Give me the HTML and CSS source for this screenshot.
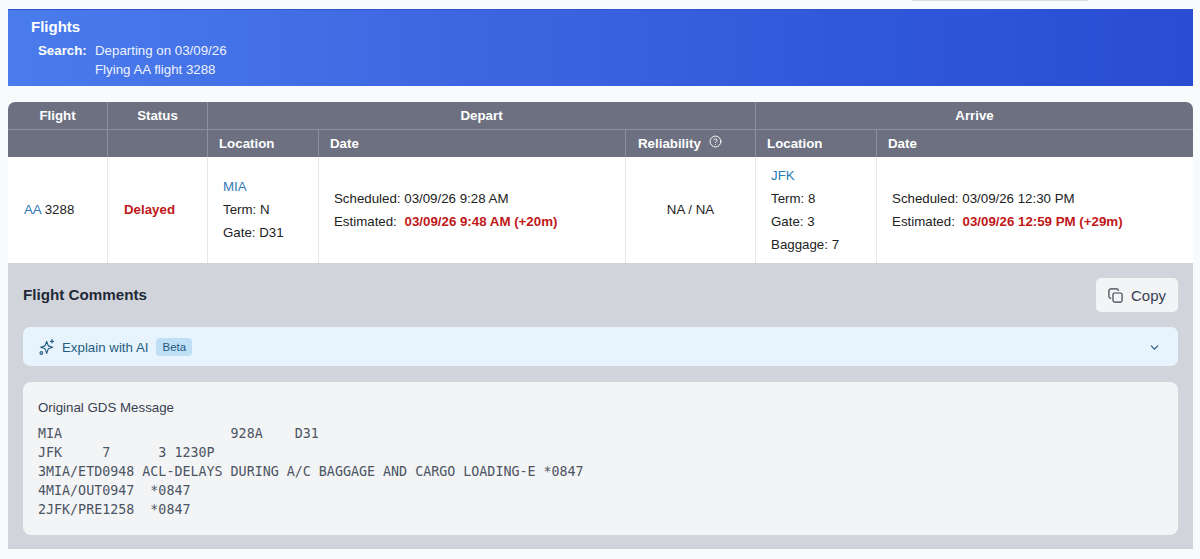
FILE: index.html
```html
<!DOCTYPE html>
<html lang="en">
<head>
<meta charset="utf-8">
<title>Flights</title>
<link rel="stylesheet" href="styles.css">
</head>
<body>
<div class="top-sliver"><div class="pill"></div></div>
<header class="banner">
  <h1>Flights</h1>
  <div class="search">
    <span class="search-label">Search:</span>
    <div class="search-lines"><div>Departing on 03/09/26</div><div>Flying AA flight 3288</div></div>
  </div>
</header>
<table class="flights">
  <colgroup>
    <col class="c1"><col class="c2"><col class="c3"><col class="c4"><col class="c5"><col class="c6"><col class="c7">
  </colgroup>
  <thead>
    <tr class="r1">
      <th>Flight</th><th>Status</th><th colspan="3">Depart</th><th colspan="2">Arrive</th>
    </tr>
    <tr class="r2">
      <th></th><th></th><th class="left">Location</th><th class="left">Date</th>
      <th class="left rel-head"><span class="rel-wrap">Reliability<svg class="help" viewBox="0 0 24 24" fill="none" stroke="currentColor" stroke-width="1.800" stroke-linecap="round" stroke-linejoin="round"><circle cx="12" cy="12" r="10"/><path d="M9.100 9a3 3 0 0 1 5.800 1c0 2-2.900 2.600-2.900 4"/><path d="M12 17.500h.01"/></svg></span></th>
      <th class="left">Location</th><th class="left">Date</th>
    </tr>
  </thead>
  <tbody>
    <tr>
      <td class="flight raised"><a href="#">AA</a> 3288</td>
      <td class="status raised">Delayed</td>
      <td class="loc raised"><a href="#">MIA</a><div>Term: N</div><div>Gate: D31</div></td>
      <td class="date"><div>Scheduled: 03/09/26 9:28 AM</div><div>Estimated: <b>03/09/26 9:48 AM (+20m)</b></div></td>
      <td class="rel raised">NA / NA</td>
      <td class="loc"><a href="#">JFK</a><div>Term: 8</div><div>Gate: 3</div><div>Baggage: 7</div></td>
      <td class="date"><div>Scheduled: 03/09/26 12:30 PM</div><div>Estimated: <b>03/09/26 12:59 PM (+29m)</b></div></td>
    </tr>
  </tbody>
</table>
<section class="comments">
  <div class="comments-head">
    <h2>Flight Comments</h2>
    <button class="copy" type="button">
      <svg viewBox="0 0 24 24" fill="none" stroke="currentColor" stroke-width="1.900" stroke-linecap="round" stroke-linejoin="round"><rect x="8" y="8" width="14.500" height="14.500" rx="2.500"/><path d="M4.500 16.500C3 16.500 1.500 15.500 1.500 14V4.500C1.500 3 3 1.500 4.500 1.500H14c1.500 0 2.500 1 2.500 2.500"/></svg>
      Copy
    </button>
  </div>
  <div class="ai">
    <div class="ai-left">
      <svg class="spark" viewBox="0 0 24 24" fill="none" stroke="currentColor" stroke-width="1.700" stroke-linecap="round" stroke-linejoin="round"><path d="M11.500 3.500l2.100 5.900c.2.600.7 1.100 1.300 1.300l5.600 1.800-5.600 1.800c-.6.2-1.100.7-1.300 1.300l-2.100 5.900-2.100-5.900c-.2-.6-.7-1.100-1.300-1.300l-5.600-1.800 5.600-1.800c.6-.2 1.100-.7 1.300-1.300z"/><path d="M19.500 1v5M17 3.500h5"/><circle cx="3.500" cy="21" r="2"/></svg>
      <span>Explain with AI</span>
      <span class="beta">Beta</span>
    </div>
    <svg class="chev" viewBox="0 0 24 24" fill="none" stroke="currentColor" stroke-width="2.200" stroke-linecap="round" stroke-linejoin="round"><path d="M6 9l6 6 6-6"/></svg>
  </div>
  <div class="gds">
    <div class="gds-title">Original GDS Message</div>
<pre>MIA                     928A    D31
JFK     7      3 1230P
3MIA/ETD0948 ACL-DELAYS DURING A/C BAGGAGE AND CARGO LOADING-E *0847
4MIA/OUT0947  *0847
2JFK/PRE1258  *0847</pre>
  </div>
</section>
</body>
</html>
```
FILE: styles.css
```css
* { box-sizing: border-box; }
html, body { height: 559px; overflow: hidden; }
body {
  margin: 0;
  padding: 0 7px 0 8px;
  background: #f9fafb;
  font-family: "Liberation Sans", Arial, sans-serif;
  font-size: 13.300px;
  color: #1f2937;
}
.top-sliver { height: 9px; display: flex; justify-content: flex-end; padding-right: 105px; }
.pill { width: 176px; height: 1px; background: #d9dbe0; border-radius: 0 0 6px 6px; }
.banner {
  height: 77px;
  padding: 9px 23px 0;
  color: #fff;
  background: linear-gradient(90deg, #4a7cec 0%, #3e68e2 35%, #3059da 70%, #2a4cd2 100%);
  border-top: 1px solid #2f55c8;
}
.banner h1 { margin: 0; font-size: 15px; line-height: 16px; font-weight: 700; }
.search { display: flex; margin: 6px 0 0 7px; line-height: 19px; }
.search-label { font-weight: 700; width: 57px; }
.search-lines { color: #eef2ff; }
.flights {
  width: 100%;
  margin-top: 16px;
  border-collapse: separate;
  border-spacing: 0;
  table-layout: fixed;
  background: #fff;
}
.c1 { width: 100px; } .c2 { width: 100px; } .c3 { width: 111px; } .c4 { width: 307px; }
.c5 { width: 130px; } .c6 { width: 121px; }
.flights th {
  background: #6d7080;
  color: #fff;
  font-size: 13.300px;
  font-weight: 700;
  text-align: center;
  padding: 0 11px;
  border-right: 1px solid #8d919e;
}
.flights th:last-child { border-right: 0; }
.flights th.left { text-align: left; }
.flights th.rel-head { padding-left: 12px; }
.rel-wrap { display: flex; align-items: center; }
.r1 th { height: 28px; border-bottom: 1px solid #8d919e; }
.r2 th { height: 27px; }
.r1 th:first-child { border-top-left-radius: 7px; }
.r1 th:last-child { border-top-right-radius: 7px; }
.help { width: 13px; height: 13px; margin: -5px 0 0 8px; }
.flights td {
  height: 106px;
  padding: 0 15px;
  border-right: 1px solid #e5e7eb;
  color: #222;
  line-height: 23px;
}
.flights td.raised { padding-bottom: 2px; }
.flights td:last-child { border-right: 0; }
.flights a { color: #2f7ab5; text-decoration: none; }
.flights td.flight { padding-left: 16px; }
.flights td.status { padding-left: 16px; color: #c01818; font-weight: 700; }
.flights td.date b { color: #c01818; margin-left: 4px; }
.flights td.rel { text-align: center; }
.comments {
  height: 286px;
  padding: 15px 15px 0;
  background: #d1d5db;
}
.comments-head { display: flex; justify-content: space-between; align-items: center; height: 34px; }
.comments h2 { margin: 0 0 2px; font-size: 15.200px; font-weight: 700; color: #1f2937; }
.copy {
  display: flex; align-items: center; gap: 8px;
  width: 82px; height: 34px;
  padding: 0 0 0 12px;
  border: 0; border-radius: 5px;
  background: #f3f4f6; color: #374151;
  font-family: inherit; font-size: 15px;
}
.copy svg { width: 15px; height: 15px; }
.ai {
  display: flex; align-items: center; justify-content: space-between;
  height: 39px; margin-top: 15px; padding: 1px 17px 0 16px;
  background: #e8f4fd; border-radius: 7px;
  color: #245c80;
}
.ai-left { display: flex; align-items: center; }
.spark { width: 16px; height: 16px; margin-right: 7px; }
.beta { margin-left: 8px; padding: 0 6px; height: 18px; line-height: 18px; font-size: 11.500px; background: #bfdff5; border-radius: 4px; }
.chev { width: 13px; height: 13px; }
.gds {
  height: 153px; margin-top: 16px; padding: 17px 15px 0;
  background: #f3f4f6; border-radius: 8px;
}
.gds-title { line-height: 17px; color: #374151; }
.gds pre {
  margin: 8px 0 0;
  font-family: "DejaVu Sans Mono", monospace;
  font-size: 13.330px;
  line-height: 19px;
  color: #4b5563;
}
```
